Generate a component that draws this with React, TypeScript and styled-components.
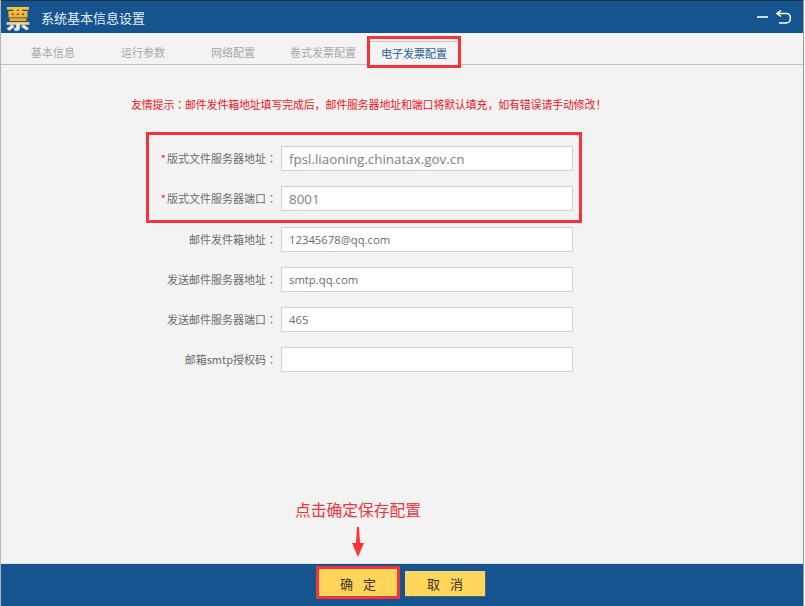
import styled, { createGlobalStyle } from "styled-components";

const GlobalStyle = createGlobalStyle`
  html, body {
    margin: 0;
    padding: 0;
    background: #fff;
  }
  * {
    box-sizing: border-box;
  }
`;

const Window = styled.div`
  width: 804px;
  height: 606px;
  display: flex;
  flex-direction: column;
  background: #f3f3f3;
  border-left: 1px solid #b5b5b5;
  border-right: 1px solid #9a9a9a;
  font-family: "Noto Sans CJK SC", "Liberation Sans", sans-serif;
`;

const TitleBar = styled.header`
  height: 33px;
  flex: none;
  display: flex;
  align-items: center;
  background: #15548f;
  border-top: 1px solid #1d2f48;
  padding: 0 12px 0 4px;
`;

const Logo = styled.span`
  width: 26px;
  font-size: 25px;
  line-height: 30px;
  font-weight: 900;
  text-align: center;
  background: linear-gradient(180deg, #ffd24a 0%, #f5a51c 62%, #f0f0e8 78%, #d8dde6 100%);
  -webkit-background-clip: text;
  background-clip: text;
  color: transparent;
`;

const Title = styled.h1`
  margin: 0 0 0 10px;
  font-size: 13px;
  font-weight: 400;
  color: #e6edf5;
  flex: 1;
`;

const WindowButtons = styled.div`
  display: flex;
  align-items: center;
  gap: 8px;
  color: #fff;
`;

const TabBar = styled.nav`
  height: 32px;
  flex: none;
  display: flex;
  align-items: flex-end;
  padding-left: 7px;
  border-bottom: 1px solid #c4c4c4;
`;

const Tab = styled.div<{ $active?: boolean }>`
  width: 90px;
  height: ${(p) => (p.$active ? "28px" : "31px")};
  margin-left: ${(p) => (p.$active ? "1px" : "0")};
  padding-top: ${(p) => (p.$active ? "2px" : "7px")};
  display: flex;
  align-items: center;
  justify-content: center;
  font-size: 11px;
  color: ${(p) => (p.$active ? "#1f5f97" : "#a8a8a8")};
  background: ${(p) => (p.$active ? "#f3f3f3" : "transparent")};
  position: relative;
  top: ${(p) => (p.$active ? "2px" : "0")};
  white-space: nowrap;
  ${(p) =>
    p.$active
      ? "outline: 3px solid #f4343a; outline-offset: -1px; box-shadow: inset 0 3px 0 #f3f3f3, inset 0 4px 0 #c4c4c4;"
      : ""}
`;

const Content = styled.main`
  flex: 1;
  display: flex;
  flex-direction: column;
  align-items: flex-start;
  position: relative;
`;

const Notice = styled.p`
  margin: 30px 0 0 130px;
  height: 18px;
  font-size: 11px;
  letter-spacing: -0.2px;
  line-height: 18px;
  color: #f5161c;
  white-space: nowrap;
`;

const Colon = styled.span`
  font-family: "Noto Sans CJK TC", sans-serif;
`;

const Highlight = styled.div`
  width: 436px;
  height: 91px;
  margin: 19px 0 0 145px;
  padding-top: 11px;
  border: 3px solid #f4343a;
  display: flex;
  flex-direction: column;
  gap: 15px;
`;

const Rows = styled.div`
  display: flex;
  flex-direction: column;
  gap: 15px;
  margin: 4px 0 0 148px;
`;

const Row = styled.div`
  display: flex;
  align-items: center;
  height: 25px;
`;

const Label = styled.label`
  width: 132px;
  padding: 0 4px 1px 0;
  flex: none;
  text-align: right;
  font-size: 11px;
  color: #6b6b6b;
  white-space: nowrap;
`;

const Star = styled.span`
  color: #e8262c;
  margin-right: 1px;
`;

const Field = styled.input<{ $large?: boolean }>`
  width: 292px;
  height: 25px;
  padding: 0 7px;
  border: 1px solid #d0d0d0;
  background: #fff;
  font-family: "Open Sans", "Liberation Sans", sans-serif;
  font-size: ${(p) => (p.$large ? "13.4px" : "11.3px")};
  color: ${(p) => (p.$large ? "#808080" : "#6b6b6b")};
  outline: none;
`;

const Callout = styled.div`
  position: absolute;
  left: 294px;
  top: 435px;
  font-size: 15.75px;
  line-height: 20px;
  color: #f4343a;
  white-space: nowrap;
`;

const Arrow = styled.svg`
  position: absolute;
  left: 351px;
  top: 462px;
`;

const Footer = styled.footer`
  height: 43px;
  flex: none;
  display: flex;
  align-items: flex-start;
  padding: 2px 0 0 315px;
  gap: 5px;
  background: #15548f;
  border-top: 1px solid #dfe6ee;
`;

const ActionButton = styled.button<{ $marked?: boolean }>`
  width: ${(p) => (p.$marked ? "84px" : "81px")};
  height: ${(p) => (p.$marked ? "33px" : "26px")};
  margin-top: ${(p) => (p.$marked ? "0" : "5px")};
  padding: ${(p) => (p.$marked ? "2px" : "0")} 0 0 10px;
  border: ${(p) => (p.$marked ? "3px solid #f4343a" : "0")};
  border-right: ${(p) => (p.$marked ? "3px solid #f4343a" : "1px solid #48637c")};
  border-bottom: ${(p) => (p.$marked ? "3px solid #f4343a" : "1px solid #48637c")};
  background: #ffd65b;
  font-family: "Noto Sans CJK SC", sans-serif;
  font-size: 13px;
  letter-spacing: 10px;
  color: #3b3320;
  white-space: nowrap;
`;

export default function App() {
  return (
    <>
      <GlobalStyle />
      <Window>
        <TitleBar>
          <Logo>票</Logo>
          <Title>系统基本信息设置</Title>
          <WindowButtons>
            <svg width="11" height="4" viewBox="0 0 11 4">
              <path d="M0 2h11" stroke="#fff" strokeWidth="1.6" />
            </svg>
            <svg width="15" height="14" viewBox="0 0 15 14" fill="none" stroke="#fff" strokeWidth="1.5">
              <path d="M5 .5 1 3.5 5 6.5" />
              <path d="M1.5 3.5h9a3.8 3.8 0 0 1 3.8 3.8v1.6a4 4 0 0 1-4 4H3" />
            </svg>
          </WindowButtons>
        </TitleBar>
        <TabBar>
          <Tab>基本信息</Tab>
          <Tab>运行参数</Tab>
          <Tab>网络配置</Tab>
          <Tab>卷式发票配置</Tab>
          <Tab $active>电子发票配置</Tab>
        </TabBar>
        <Content>
          <Notice>
            友情提示<Colon>：</Colon>邮件发件箱地址填写完成后，邮件服务器地址和端口将默认填充，如有错误请手动修改！
          </Notice>
          <Highlight>
            <Row>
              <Label><Star>*</Star>版式文件服务器地址<Colon>：</Colon></Label>
              <Field $large readOnly value="fpsl.liaoning.chinatax.gov.cn" />
            </Row>
            <Row>
              <Label><Star>*</Star>版式文件服务器端口<Colon>：</Colon></Label>
              <Field $large readOnly value="8001" />
            </Row>
          </Highlight>
          <Rows>
            <Row>
              <Label>邮件发件箱地址<Colon>：</Colon></Label>
              <Field readOnly value="12345678@qq.com" />
            </Row>
            <Row>
              <Label>发送邮件服务器地址<Colon>：</Colon></Label>
              <Field readOnly value="smtp.qq.com" />
            </Row>
            <Row>
              <Label>发送邮件服务器端口<Colon>：</Colon></Label>
              <Field readOnly value="465" />
            </Row>
            <Row>
              <Label>邮箱smtp授权码<Colon>：</Colon></Label>
              <Field readOnly value="" />
            </Row>
          </Rows>
          <Callout>点击确定保存配置</Callout>
          <Arrow width="12" height="30" viewBox="0 0 12 30">
            <path d="M5 0h2l1 16h4L6 30 0 16h4z" fill="#f4343a" />
          </Arrow>
        </Content>
        <Footer>
          <ActionButton $marked>确定</ActionButton>
          <ActionButton>取消</ActionButton>
        </Footer>
      </Window>
    </>
  );
}
